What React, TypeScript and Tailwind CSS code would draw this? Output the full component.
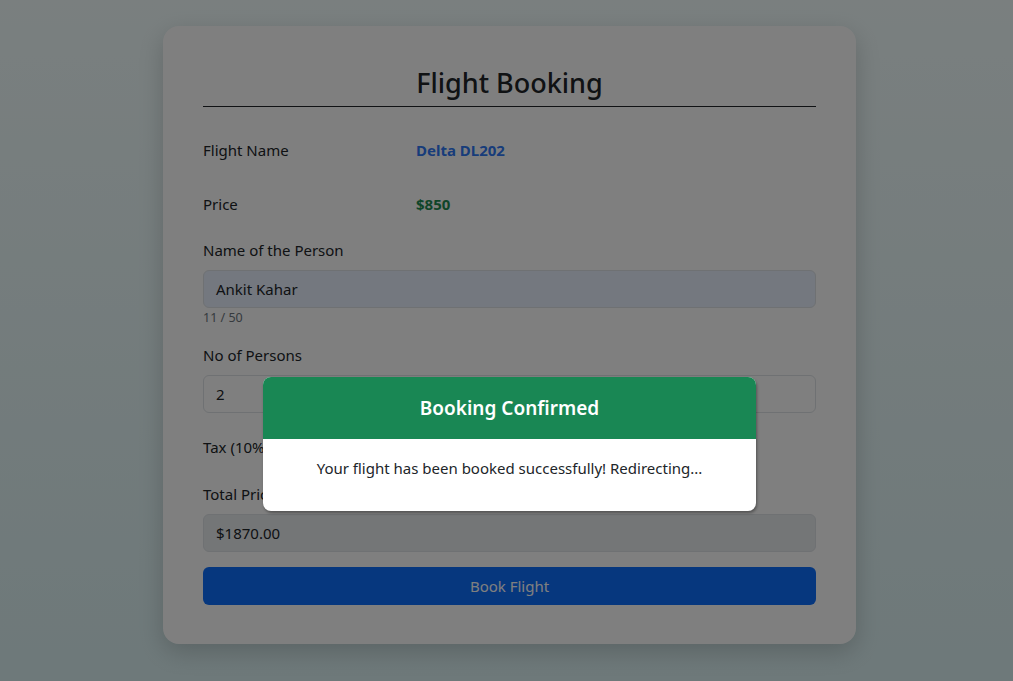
import React from "react";

export default function App() {
  const font = { fontFamily: '"Noto Sans", "Open Sans", sans-serif' };
  return (
    <div
      className="relative w-full h-[681px] overflow-hidden bg-gradient-to-b from-[#f4ffff] to-[#dcf2f4] text-[#212529]"
      style={font}
    >
      <div className="flex justify-center pl-[6px] pt-[26px]">
        <div className="w-[693px] bg-white rounded-2xl shadow-[0_8px_24px_rgba(0,0,0,0.18)] px-10 pt-10 pb-[39px]">
          <h2 className="text-center text-[27px] leading-[34px] font-medium pb-[6px] border-b border-[#212529]">
            Flight Booking
          </h2>
          <div className="flex items-center h-6 mt-[31px] text-[15px]">
            <div className="w-[213px]">Flight Name</div>
            <div className="font-bold text-[#2f78f5]">Delta DL202</div>
          </div>
          <div className="flex items-center h-6 mt-[30px] text-[15px]">
            <div className="w-[213px]">Price</div>
            <div className="font-bold text-[#1f8a52]">$850</div>
          </div>
          <div className="mt-[22px] text-[15px] leading-6">Name of the Person</div>
          <div className="mt-2 h-[38px] rounded-md border border-[#dee2e6] bg-[#e8f0fe] px-3 flex items-center text-[15px]">
            Ankit Kahar
          </div>
          <div className="text-[12.5px] leading-[18px] text-[#6c757d] mt-[1px]">11 / 50</div>
          <div className="mt-4 text-[15px] leading-6">No of Persons</div>
          <div className="mt-2 h-[38px] rounded-md border border-[#dee2e6] bg-white px-3 flex items-center text-[15px]">
            2
          </div>
          <div className="flex items-center h-6 mt-[22px] text-[15px]">
            <div className="w-[213px]">Tax (10%)</div>
            <div className="font-bold">$170.00</div>
          </div>
          <div className="mt-[23px] text-[15px] leading-6">Total Price</div>
          <div className="mt-2 h-[38px] rounded-md border border-[#dee2e6] bg-[#e9ecef] px-3 flex items-center text-[15px]">
            $1870.00
          </div>
          <button className="mt-[15px] w-full h-[38px] rounded-md bg-[#0d6efd] text-white text-[15px]">
            Book Flight
          </button>
        </div>
      </div>

      <div className="absolute inset-0 bg-black/50" />

      <div className="absolute inset-x-0 top-[377px] flex justify-center pl-[6px]">
        <div className="w-[493px] rounded-lg overflow-hidden bg-white shadow-[1px_2px_3px_rgba(0,0,0,0.35)]">
          <div className="h-[62px] bg-[#198754] flex items-center justify-center text-white text-[19px] font-semibold">
            Booking Confirmed
          </div>
          <div className="h-[72px] flex items-start justify-center pt-[17px] text-[15px] leading-6 text-[#212529]">
            Your flight has been booked successfully! Redirecting...
          </div>
        </div>
      </div>
    </div>
  );
}
